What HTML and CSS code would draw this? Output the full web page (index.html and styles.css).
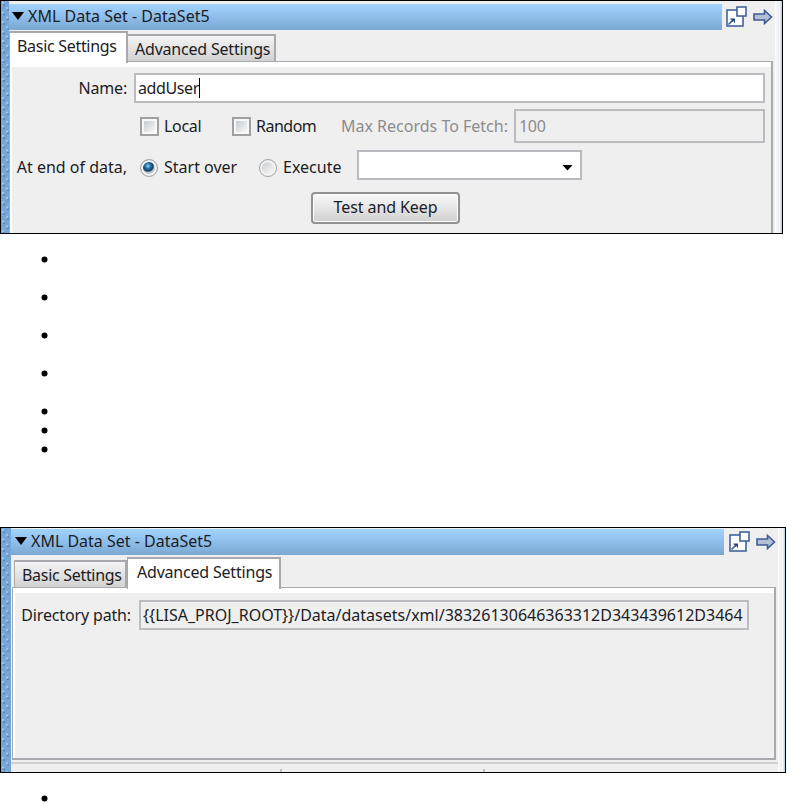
FILE: index.html
```html
<!DOCTYPE html>
<html lang="en">
<head>
    <meta charset="UTF-8">
    <meta name="viewport" content="width=device-width, initial-scale=1.0">
    <title>XML Data Set</title>
    <link rel="stylesheet" href="styles.css">
</head>
<body>
    <svg class="defs" width="0" height="0">
        <symbol id="detach" viewBox="0 0 21 21">
            <rect x="1" y="4" width="16" height="16" fill="#fff" stroke="#43639b" stroke-width="1.6"/>
            <rect x="11" y="1" width="9" height="9" fill="#fff" stroke="#43639b" stroke-width="1.6"/>
            <path d="M2.5 18.5L7 14" stroke="#43639b" stroke-width="1.7" fill="none"/>
            <path d="M4.5 12.5H9V17.5L7.5 15L6 16V14L4.5 13.5Z" fill="#254684"/>
        </symbol>
        <symbol id="arrow" viewBox="0 0 20 16">
            <path d="M1 5H11.5V1.5L18.5 8L11.5 14.5V11H1Z" fill="#b5bfd3" stroke="#3d5c98" stroke-width="1.6"/>
        </symbol>
    </svg>

    <div class="panel basic">
        <div class="grip"></div>
        <div class="main">
            <div class="header">
                <div class="title"><span class="triangle"></span><span>XML Data Set - DataSet5</span></div>
                <svg class="detach"><use href="#detach"/></svg>
                <svg class="arrow"><use href="#arrow"/></svg>
            </div>
            <div class="tabs">
                <div class="tab active">Basic Settings</div>
                <div class="tab">Advanced Settings</div>
            </div>
            <div class="pane">
                <div class="row name-row">
                    <label class="label">Name:</label>
                    <div class="field"><span class="name">addUser</span><span class="caret"></span></div>
                </div>
                <div class="row fetch-row">
                    <span class="checkbox"></span><span class="local">Local</span>
                    <span class="checkbox"></span><span class="random">Random</span>
                    <span class="max">Max Records To Fetch:</span>
                    <div class="field disabled">100</div>
                </div>
                <div class="row end-row">
                    <label class="label">At end of data,</label>
                    <span class="radio checked"></span><span class="start">Start over</span>
                    <span class="radio"></span><span class="execute">Execute</span>
                    <div class="combo"><span class="down"></span></div>
                </div>
                <div class="button">Test and Keep</div>
            </div>
        </div>
        <div class="edge"></div>
    </div>

    <ul class="list">
        <li class="tall"></li>
        <li class="tall"></li>
        <li class="tall"></li>
        <li class="tall"></li>
        <li></li>
        <li></li>
        <li></li>
    </ul>

    <div class="panel advanced">
        <div class="grip"></div>
        <div class="main">
            <div class="header">
                <div class="title"><span class="triangle"></span><span>XML Data Set - DataSet5</span></div>
                <svg class="detach"><use href="#detach"/></svg>
                <svg class="arrow"><use href="#arrow"/></svg>
            </div>
            <div class="tabs">
                <div class="tab">Basic Settings</div>
                <div class="tab active">Advanced Settings</div>
            </div>
            <div class="pane">
                <div class="row">
                    <label class="label">Directory path:</label>
                    <div class="field path">{{LISA_PROJ_ROOT}}/Data/datasets/xml/38326130646363312D343439612D3464</div>
                </div>
            </div>
            <div class="footer"><span></span><span></span></div>
        </div>
        <div class="edge"></div>
    </div>

    <ul class="list last">
        <li></li>
    </ul>
</body>
</html>
```
FILE: styles.css
```css
* {
    box-sizing: border-box;
}
body {
    margin: 0;
    height: 802px;
    overflow: hidden;
    background: #fff;
    color: #1c1c24;
    font-family: "Noto Sans", sans-serif;
    font-size: 16px;
    line-height: 22px;
    white-space: nowrap;
}
.defs {
    display: block;
}
.panel {
    display: flex;
    border: 1px solid #000;
    background: #efefef;
    overflow: hidden;
}
.basic {
    width: 783px;
    height: 234px;
}
.advanced {
    width: 786px;
    height: 246px;
}
.grip {
    width: 8px;
    flex: none;
    background-color: #76a5d8;
    background-image:
        radial-gradient(circle at 2px 2px, #a5d3f3 0.5px, transparent 1.4px),
        radial-gradient(circle at 3px 4px, #4f7fb3 0.5px, transparent 1.3px),
        radial-gradient(circle at 6px 7px, #a5d3f3 0.5px, transparent 1.4px),
        radial-gradient(circle at 7px 9px, #4f7fb3 0.5px, transparent 1.3px);
    background-size: 9px 9.5px;
}
.advanced .grip {
    width: 10px;
}
.main {
    flex: 1;
    min-width: 0;
    display: flex;
    flex-direction: column;
}
.edge {
    width: 7px;
    flex: none;
    background: linear-gradient(to right, #fff 0, #efefef 3px, #efefef 4px, #fff 5px, #b5d4ef 6px, #b5d4ef 7px);
}
.header {
    display: flex;
    flex: none;
    align-items: center;
    height: 26px;
    margin-top: 3px;
}
.advanced .header {
    margin-top: 1px;
}
.title {
    display: flex;
    align-items: center;
    width: 713px;
    height: 26px;
    padding: 0 0 2px 3px;
    background: linear-gradient(#a2d3ff, #7aa8d3);
}
.advanced .title {
    padding-left: 4px;
}
.basic .title {
    letter-spacing: 0.02px;
}
.triangle {
    width: 12px;
    height: 8px;
    margin-right: 4px;
    background: #000;
    clip-path: polygon(0 0, 100% 0, 50% 100%);
}
.detach {
    width: 21px;
    height: 21px;
    margin: -2px 0 0 4px;
}
.advanced .detach {
    margin-left: 5px;
}
.arrow {
    width: 20px;
    height: 16px;
    margin: -1px 0 0 6px;
}
.tabs {
    display: flex;
    align-items: flex-end;
    height: 31px;
    flex: none;
}
.advanced .tabs {
    height: 32px;
}
.tab {
    height: 27px;
    padding: 3px 0 0 7px;
    border: 2px solid #a8a8ae;
    border-bottom: none;
    border-left-width: 0;
    background: linear-gradient(#f4f4f4, #d2d2d2);
    line-height: 21px;
    letter-spacing: -0.3px;
}
.tab.active {
    position: relative;
    height: 32px;
    margin-bottom: -2px;
    border-left-width: 1px;
    background: #fff;
}
.basic .tab {
    width: 148px;
    letter-spacing: -0.2px;
}
.basic .tab.active {
    width: 119px;
    padding-top: 3px;
    letter-spacing: -0.3px;
}
.advanced .tab {
    width: 113px;
    margin-left: 3px;
    border-left-width: 1px;
}
.advanced .tab.active {
    width: 154px;
    margin-left: 0;
    padding: 3px 0 0 9px;
    letter-spacing: -0.2px;
}
.pane {
    flex: none;
    border: 2px solid #a9a9b0;
    border-left-width: 1px;
    border-top-width: 1px;
    box-shadow: inset 2px 5px 0 #fff;
}
.basic .pane {
    width: 764px;
    height: 180px;
    padding-top: 11px;
    border-bottom: none;
}
.advanced .pane {
    width: 764px;
    height: 173px;
    margin-left: 1px;
    padding-top: 12px;
}
.row {
    display: flex;
    align-items: center;
}
.label {
    flex: none;
    text-align: right;
}
.basic .label {
    width: 117px;
}
.name-row .label {
    letter-spacing: -0.2px;
}
.advanced .label {
    width: 118px;
    letter-spacing: -0.15px;
}
.field {
    display: flex;
    align-items: center;
    height: 30px;
    padding-left: 2px;
    border: 2px solid #bbbbc0;
    background: #fff;
}
.name-row .field {
    width: 631px;
    margin-left: 7px;
}
.name {
    letter-spacing: -0.4px;
}
.caret {
    width: 1px;
    height: 20px;
    background: #000;
}
.fetch-row {
    height: 34px;
    margin-top: 6px;
    padding-left: 130px;
}
.fetch-row .disabled {
    width: 251px;
    height: 34px;
    padding-left: 3px;
    background: #efefef;
    letter-spacing: -0.3px;
}
.disabled, .max {
    color: #8c8c8e;
}
.checkbox {
    width: 19px;
    height: 19px;
    margin-right: 5px;
    border: 2px solid #a0a0a0;
    outline: 2px solid #f8f8f8;
    outline-offset: -4px;
    background: linear-gradient(135deg, #c0c5ca, #fff);
}
.local {
    width: 68px;
    letter-spacing: -0.3px;
}
.random {
    width: 85px;
    letter-spacing: -0.5px;
}
.max {
    width: 173px;
}
.end-row {
    height: 30px;
    margin-top: 7px;
}
.end-row .label, .start, .execute {
    padding-top: 3px;
}
.radio {
    width: 18px;
    height: 18px;
    margin: 6px 6px 0 0;
    border: 1px solid #a2a2a2;
    border-radius: 50%;
    box-shadow: inset 0 0 0 2px #f4f4f4;
    background: linear-gradient(135deg, #c3c8cc, #fff);
}
.end-row .label + .radio {
    margin-left: 13px;
}
.radio.checked {
    background: radial-gradient(circle at 7px 6px, #93d8f4 0, #287cac 2.5px, #123c5e 5px, #bcc5cb 6.5px);
}
.start {
    width: 95px;
}
.execute {
    width: 74px;
}
.combo {
    display: flex;
    justify-content: flex-end;
    align-items: center;
    width: 225px;
    height: 30px;
    padding-right: 7px;
    border: 2px solid #b9b9c0;
    background: #fff;
}
.down {
    width: 11px;
    height: 6px;
    margin-top: 5px;
    background: #000;
    clip-path: polygon(0 0, 100% 0, 50% 100%);
}
.button {
    width: 149px;
    height: 32px;
    margin: 12px 0 0 301px;
    border: 2px solid #929292;
    border-radius: 4px;
    box-shadow: inset 0 0 0 1px #fff;
    background: linear-gradient(#f8f8f8, #e6e6e6 50%, #cfcfcf);
    line-height: 27px;
    text-align: center;
    letter-spacing: -0.1px;
}
.path {
    width: 610px;
    margin-left: 8px;
    background: #efefef;
}
.footer {
    display: flex;
    flex: none;
    height: 10px;
    margin-top: 2px;
    padding-top: 5px;
    border-top: 2px solid #d0d0d0;
}
.footer span {
    width: 203px;
    height: 4px;
    border-left: 2px solid #c0c0c0;
}
.footer span:first-child {
    margin-left: 269px;
}
.list {
    height: 293px;
    margin: 0;
    padding: 16px 0 0 41px;
    list-style: none;
}
.list li {
    height: 19px;
}
.list .tall {
    height: 38px;
}
.list li::before {
    content: "";
    display: block;
    width: 6px;
    height: 6px;
    border-radius: 50%;
    background: #000;
    transform: translate(0.5px, 6.5px);
}
.last {
    height: 29px;
}
```
